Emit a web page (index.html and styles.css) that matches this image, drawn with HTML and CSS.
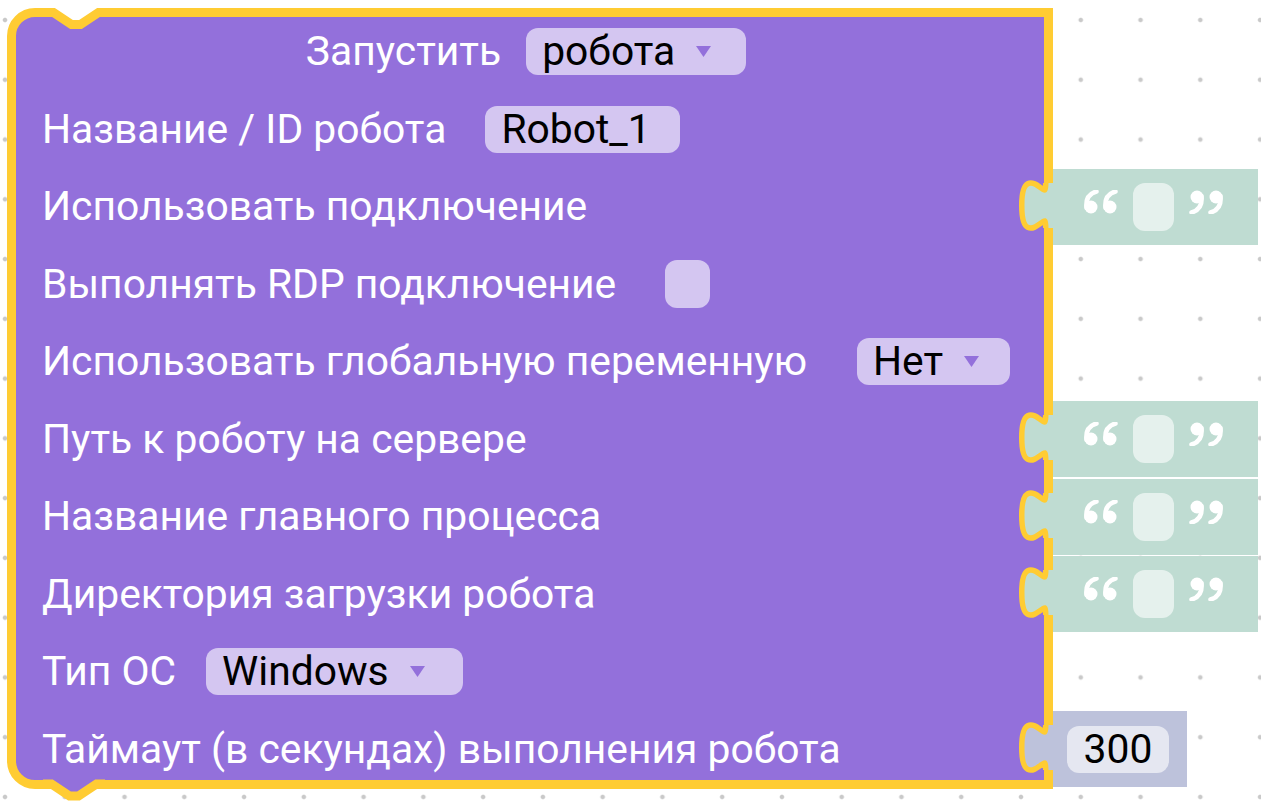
FILE: index.html
```html
<!DOCTYPE html>
<html lang="ru">
<head>
<meta charset="utf-8">
<title>Запустить робота</title>
<link rel="stylesheet" href="styles.css">
</head>
<body>
<div class="workspace">
  <div class="block">
    <svg class="notch-top" width="110" height="32" viewBox="0 0 110 32">
      <polygon points="46.5,0 46.5,4.5 64.5,16.5 73.5,16.5 91.5,4.5 91.5,0" fill="#ffffff"/>
      <path d="M38 4.5 L46.5 4.5 l18 12 l9 0 l18 -12 L100 4.5" fill="none" stroke="#ffcc33" stroke-width="9"/>
    </svg>

    <div class="row row-center">
      <span class="label">Запустить</span>
      <span class="field dropdown f-run">робота<svg class="arrow" width="15" height="11" viewBox="0 0 15 11"><polygon points="0,0 15,0 7.5,11"/></svg></span>
    </div>

    <div class="row">
      <span class="label">Название / ID робота</span>
      <span class="field f-id">Robot_1</span>
    </div>

    <div class="row">
      <span class="label">Использовать подключение</span>
      <div class="attached text-block">
        <svg class="tab" width="45" height="76" viewBox="0 0 45 76">
          <path d="M32.5 14 c0 30 -24 -24 -24 22.5 s24 -7.5 24 22.5" fill="none" stroke="#ffcc33" stroke-width="11"/>
          <path d="M32.5 14 c0 30 -24 -24 -24 22.5 s24 -7.5 24 22.5 L38 59 L38 14 Z" class="tab-fill"/>
        </svg>
        <svg class="quote" width="36" height="24" viewBox="0 0 36 24"><circle cx="9" cy="17" r="6.5"/><path d="M4.5 18 C3.5 9 7 3.5 14.5 1.5"/><circle cx="28" cy="17" r="6.5"/><path d="M23.5 18 C22.5 9 26 3.5 33.5 1.5"/></svg>
        <span class="text-input"></span>
        <svg class="quote close" width="36" height="24" viewBox="0 0 36 24"><circle cx="9" cy="17" r="6.5"/><path d="M4.5 18 C3.5 9 7 3.5 14.5 1.5"/><circle cx="28" cy="17" r="6.5"/><path d="M23.5 18 C22.5 9 26 3.5 33.5 1.5"/></svg>
      </div>
    </div>

    <div class="row">
      <span class="label">Выполнять RDP подключение</span>
      <span class="checkbox"></span>
    </div>

    <div class="row">
      <span class="label">Использовать глобальную переменную</span>
      <span class="field dropdown f-glob">Нет<svg class="arrow" width="15" height="11" viewBox="0 0 15 11"><polygon points="0,0 15,0 7.5,11"/></svg></span>
    </div>

    <div class="row">
      <span class="label">Путь к роботу на сервере</span>
      <div class="attached text-block">
        <svg class="tab" width="45" height="76" viewBox="0 0 45 76">
          <path d="M32.5 14 c0 30 -24 -24 -24 22.5 s24 -7.5 24 22.5" fill="none" stroke="#ffcc33" stroke-width="11"/>
          <path d="M32.5 14 c0 30 -24 -24 -24 22.5 s24 -7.5 24 22.5 L38 59 L38 14 Z" class="tab-fill"/>
        </svg>
        <svg class="quote" width="36" height="24" viewBox="0 0 36 24"><circle cx="9" cy="17" r="6.5"/><path d="M4.5 18 C3.5 9 7 3.5 14.5 1.5"/><circle cx="28" cy="17" r="6.5"/><path d="M23.5 18 C22.5 9 26 3.5 33.5 1.5"/></svg>
        <span class="text-input"></span>
        <svg class="quote close" width="36" height="24" viewBox="0 0 36 24"><circle cx="9" cy="17" r="6.5"/><path d="M4.5 18 C3.5 9 7 3.5 14.5 1.5"/><circle cx="28" cy="17" r="6.5"/><path d="M23.5 18 C22.5 9 26 3.5 33.5 1.5"/></svg>
      </div>
    </div>

    <div class="row">
      <span class="label">Название главного процесса</span>
      <div class="attached text-block">
        <svg class="tab" width="45" height="76" viewBox="0 0 45 76">
          <path d="M32.5 14 c0 30 -24 -24 -24 22.5 s24 -7.5 24 22.5" fill="none" stroke="#ffcc33" stroke-width="11"/>
          <path d="M32.5 14 c0 30 -24 -24 -24 22.5 s24 -7.5 24 22.5 L38 59 L38 14 Z" class="tab-fill"/>
        </svg>
        <svg class="quote" width="36" height="24" viewBox="0 0 36 24"><circle cx="9" cy="17" r="6.5"/><path d="M4.5 18 C3.5 9 7 3.5 14.5 1.5"/><circle cx="28" cy="17" r="6.5"/><path d="M23.5 18 C22.5 9 26 3.5 33.5 1.5"/></svg>
        <span class="text-input"></span>
        <svg class="quote close" width="36" height="24" viewBox="0 0 36 24"><circle cx="9" cy="17" r="6.5"/><path d="M4.5 18 C3.5 9 7 3.5 14.5 1.5"/><circle cx="28" cy="17" r="6.5"/><path d="M23.5 18 C22.5 9 26 3.5 33.5 1.5"/></svg>
      </div>
    </div>

    <div class="row">
      <span class="label">Директория загрузки робота</span>
      <div class="attached text-block">
        <svg class="tab" width="45" height="76" viewBox="0 0 45 76">
          <path d="M32.5 14 c0 30 -24 -24 -24 22.5 s24 -7.5 24 22.5" fill="none" stroke="#ffcc33" stroke-width="11"/>
          <path d="M32.5 14 c0 30 -24 -24 -24 22.5 s24 -7.5 24 22.5 L38 59 L38 14 Z" class="tab-fill"/>
        </svg>
        <svg class="quote" width="36" height="24" viewBox="0 0 36 24"><circle cx="9" cy="17" r="6.5"/><path d="M4.5 18 C3.5 9 7 3.5 14.5 1.5"/><circle cx="28" cy="17" r="6.5"/><path d="M23.5 18 C22.5 9 26 3.5 33.5 1.5"/></svg>
        <span class="text-input"></span>
        <svg class="quote close" width="36" height="24" viewBox="0 0 36 24"><circle cx="9" cy="17" r="6.5"/><path d="M4.5 18 C3.5 9 7 3.5 14.5 1.5"/><circle cx="28" cy="17" r="6.5"/><path d="M23.5 18 C22.5 9 26 3.5 33.5 1.5"/></svg>
      </div>
    </div>

    <div class="row">
      <span class="label">Тип ОС</span>
      <span class="field dropdown f-os">Windows<svg class="arrow" width="15" height="11" viewBox="0 0 15 11"><polygon points="0,0 15,0 7.5,11"/></svg></span>
    </div>

    <div class="row">
      <span class="label">Таймаут (в секундах) выполнения робота</span>
      <div class="attached num-block">
        <svg class="tab" width="45" height="76" viewBox="0 0 45 76">
          <path d="M32.5 14 c0 30 -24 -24 -24 22.5 s24 -7.5 24 22.5" fill="none" stroke="#ffcc33" stroke-width="11"/>
          <path d="M32.5 14 c0 30 -24 -24 -24 22.5 s24 -7.5 24 22.5 L38 59 L38 14 Z" class="tab-fill"/>
        </svg>
        <span class="num-input">300</span>
      </div>
    </div>

    <svg class="tab-bottom" width="110" height="33" viewBox="0 0 110 33">
      <polygon points="44.5,11 44.5,16 62.5,28 71.5,28 89.5,16 89.5,11" fill="#9370db"/>
      <path d="M36 16 L44.5 16 l18 12 l9 0 l18 -12 L98 16" fill="none" stroke="#ffcc33" stroke-width="9"/>
    </svg>
  </div>
</div>
</body>
</html>
```
FILE: styles.css
```css
html, body {
  margin: 0;
  padding: 0;
}

body {
  background: #ffffff;
  font-family: Roboto, "Noto Sans", "Liberation Sans", sans-serif;
}

.workspace {
  width: 1261px;
  height: 808px;
  box-sizing: border-box;
  padding: 8px 0 0 7px;
  overflow: hidden;
  background-color: #ffffff;
  background-image: radial-gradient(circle, #c9c9c9 0, #c9c9c9 1.7px, rgba(201,201,201,0) 2.8px);
  background-size: 59.77px 59.77px;
  background-position: -24.9px -9.9px;
}

.block {
  position: relative;
  width: 1046px;
  box-sizing: border-box;
  border: 9px solid #ffcc33;
  border-radius: 28px 0 0 28px;
  background: #9370db;
  padding: 11px 34px 7.5px 26px;
  display: flex;
  flex-direction: column;
  gap: 30.5px;
}

.notch-top {
  position: absolute;
  left: -9px;
  top: -9px;
  overflow: visible;
}

.tab-bottom {
  position: absolute;
  left: -9px;
  bottom: -21px;
  overflow: visible;
}

.row {
  position: relative;
  display: flex;
  align-items: center;
  height: 47px;
}

.row-center {
  justify-content: center;
}

.label {
  color: #ffffff;
  font-size: 40.8px;
  line-height: 47px;
  white-space: nowrap;
}

.field {
  display: inline-flex;
  align-items: center;
  box-sizing: border-box;
  height: 47px;
  padding-left: 16px;
  border-radius: 12px;
  background: #d4c6f1;
  color: #000000;
  font-size: 40.8px;
  line-height: 47px;
  white-space: nowrap;
}

.arrow {
  margin-left: 21px;
  fill: #9370db;
  flex: none;
}

.f-run {
  width: 220px;
  margin-left: 25px;
}

.f-id {
  width: 195px;
  margin-left: 39px;
}

.f-glob {
  width: 153px;
  margin-left: 50px;
}

.f-os {
  width: 257px;
  margin-left: 30px;
}

.checkbox {
  width: 45px;
  height: 48px;
  margin-left: 49px;
  border-radius: 12px;
  background: #d4c6f1;
}

.attached {
  position: absolute;
  left: calc(100% + 43px);
  top: 50%;
  height: 76px;
  margin-top: -38px;
  display: flex;
  align-items: center;
  box-sizing: border-box;
}

.tab {
  position: absolute;
  left: -37px;
  top: 0;
  overflow: visible;
}

.text-block {
  width: 205px;
  background: #bfdcd2;
  padding-left: 29px;
}

.text-block .tab-fill {
  fill: #bfdcd2;
}

.num-block {
  width: 134px;
  background: #bdc2db;
  padding-left: 14px;
}

.num-block .tab-fill {
  fill: #bdc2db;
}

.quote {
  flex: none;
  margin-bottom: 10px;
  fill: #ffffff;
  stroke: #ffffff;
}

.quote circle {
  stroke: none;
}

.quote path {
  fill: none;
  stroke-width: 4.5px;
  stroke-linecap: round;
}

.quote.close {
  transform: rotate(180deg);
  margin-left: 15px;
}

.text-input {
  width: 41px;
  height: 48px;
  margin-left: 15px;
  border-radius: 12px;
  background: rgba(255, 255, 255, 0.6);
}

.num-input {
  width: 102px;
  height: 47px;
  border-radius: 12px;
  background: rgba(255, 255, 255, 0.6);
  color: #000000;
  font-size: 40.8px;
  line-height: 47px;
  text-align: center;
}
```
